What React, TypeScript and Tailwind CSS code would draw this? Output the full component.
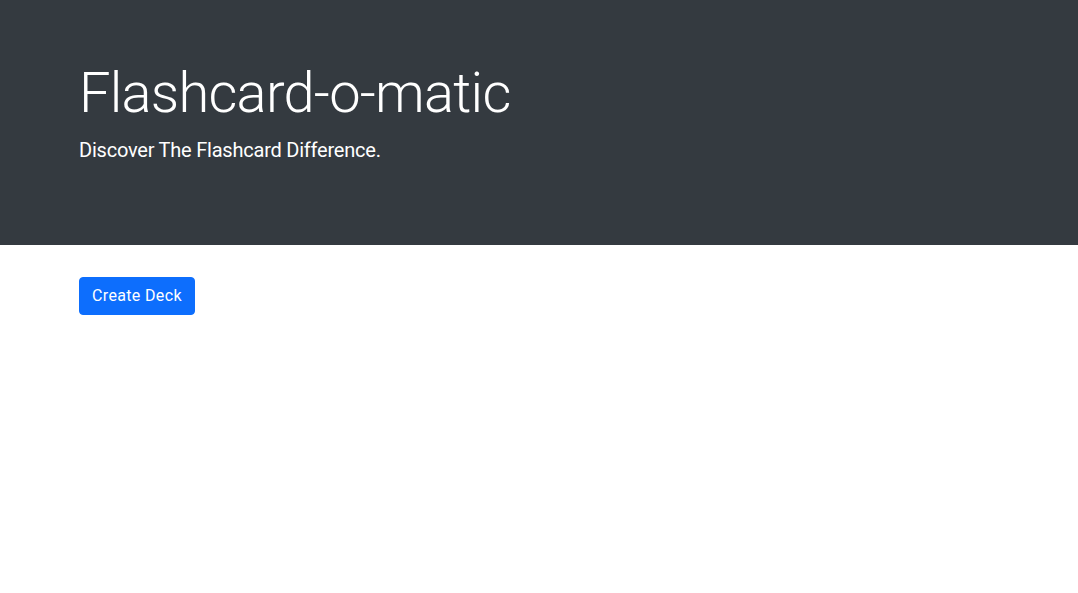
export default function App() {
  return (
    <div className="min-h-[593px] bg-white" style={{ fontFamily: 'Roboto, "Noto Sans", sans-serif' }}>
      <header className="bg-[#343a40] text-white pt-[60px] pb-[64px] mb-8">
        <div className="mx-auto max-w-[960px] px-5">
          <h1 className="text-[56px] font-light leading-[1.2] mb-2 tracking-[-0.75px]">Flashcard-o-matic</h1>
          <p className="text-[20px] leading-[1.5] font-normal mb-4 tracking-[-0.22px]">Discover The Flashcard Difference.</p>
        </div>
      </header>
      <main className="mx-auto max-w-[960px] px-5">
        <button className="bg-[#0d6efd] text-white text-[16px] leading-6 px-3 py-[6px] border border-[#0d6efd] rounded-[4px] tracking-[0.35px]">
          Create Deck
        </button>
      </main>
    </div>
  );
}
